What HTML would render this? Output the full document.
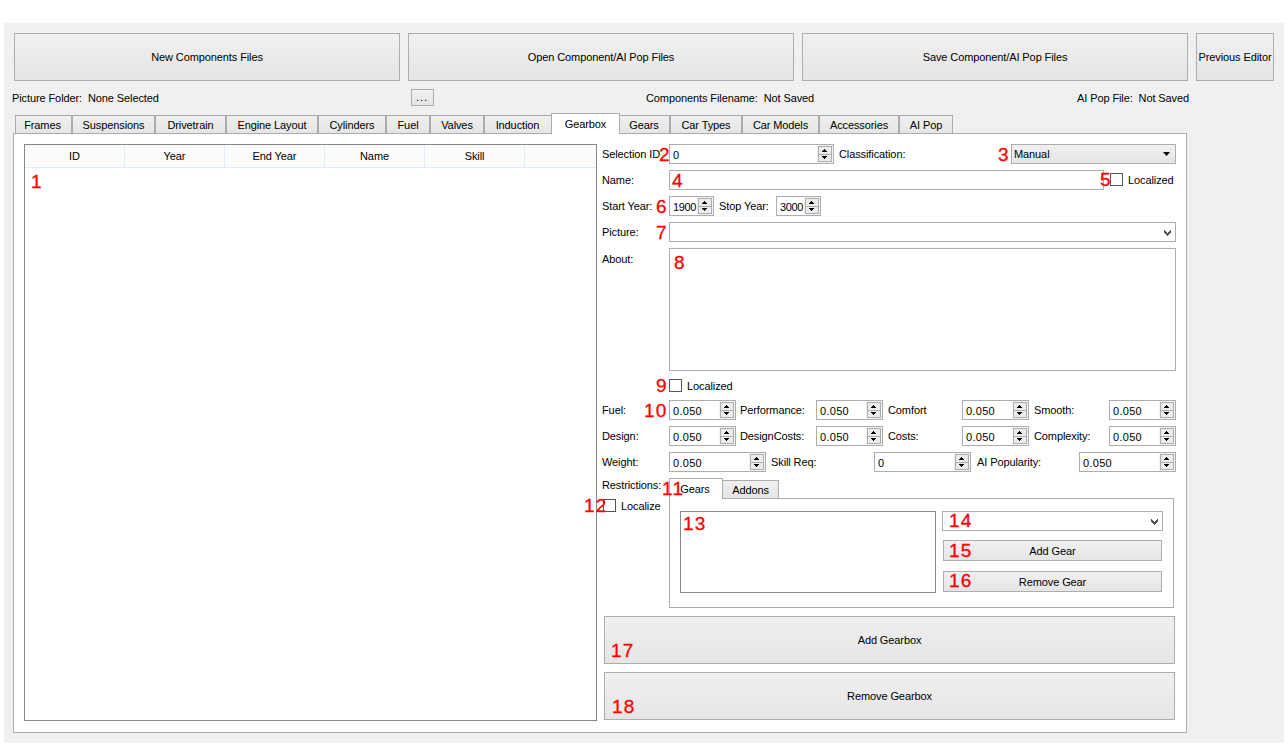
<!DOCTYPE html>
<html><head><meta charset="utf-8">
<style>
*{box-sizing:border-box;margin:0;padding:0}
html,body{width:1288px;height:747px;background:#fff;overflow:hidden;position:relative;font-family:"Liberation Sans",sans-serif;font-size:11px;color:#000}
div,span,svg{position:absolute}
.win{left:4px;top:23px;width:1280px;height:720px;background:#f0f0f0}
.btn{border:1px solid #adadad;background:linear-gradient(#f0f0f0,#e5e5e5)}
.btn .t{left:0;right:0;text-align:center}
.t{white-space:nowrap;line-height:13px;letter-spacing:-0.1px}
.tab{top:115px;height:19px;border:1px solid #acacac;background:linear-gradient(#f0f0f0,#e5e5e5)}
.tab .t{left:0;right:0;text-align:center;top:3px}
.tab.sel{top:113px;height:21px;background:#fff;border-right:1px solid #acacac;box-shadow:none;border-bottom:none;z-index:3}
.tab.sel .t{top:4px}
.pane{border:1px solid #acacac;background:#fff}
.edit{border:1px solid #abadb3;background:#fff}
.chk{width:13px;height:13px;border:1px solid #555;background:#fff}
.red{color:#f00;font-size:19px;line-height:19px;white-space:nowrap;-webkit-text-stroke:0.3px #f00;letter-spacing:1.3px;z-index:10}
.spin{border:1px solid #abadb3;background:#fff}
.spin .t{letter-spacing:-0.35px}
.sb{background:#f3f3f3}
.bx{border:1px solid #adadad;background:#ececec}
.ar{background:#000}
</style></head><body>
<div class="win"></div>
<div class="btn" style="left:14px;top:33px;width:386px;height:48px"><span class="t" style="top:17px">New Components Files</span></div>
<div class="btn" style="left:408px;top:33px;width:386px;height:48px"><span class="t" style="top:17px">Open Component/AI Pop Files</span></div>
<div class="btn" style="left:802px;top:33px;width:386px;height:48px"><span class="t" style="top:17px">Save Component/AI Pop Files</span></div>
<div class="btn" style="left:1196px;top:33px;width:78px;height:48px"><span class="t" style="top:17px">Previous Editor</span></div>
<span class="t" style="left:12px;top:92px;">Picture Folder:&nbsp; None Selected</span>
<div class="btn" style="left:411px;top:89px;width:23px;height:17px"><span class="t" style="left:4px;right:auto;text-align:left;top:1px;letter-spacing:1px">...</span></div>
<span class="t" style="left:646px;top:92px;">Components Filename:&nbsp; Not Saved</span>
<span class="t" style="left:1077px;top:92px;">AI Pop File:&nbsp; Not Saved</span>
<div class="pane" style="left:13px;top:133px;width:1174px;height:600px;"></div>
<div class="tab" style="left:15px;width:57px"><span class="t" style="left:-1px;right:1px;">Frames</span></div>
<div class="tab" style="left:72px;width:83px"><span class="t" style="">Suspensions</span></div>
<div class="tab" style="left:155px;width:71px"><span class="t" style="">Drivetrain</span></div>
<div class="tab" style="left:226px;width:92px"><span class="t" style="">Engine Layout</span></div>
<div class="tab" style="left:318px;width:68px"><span class="t" style="">Cylinders</span></div>
<div class="tab" style="left:386px;width:44px"><span class="t" style="">Fuel</span></div>
<div class="tab" style="left:430px;width:54px"><span class="t" style="">Valves</span></div>
<div class="tab" style="left:484px;width:69px"><span class="t" style="left:-1px;right:1px;">Induction</span></div>
<div class="tab" style="left:618px;width:52px"><span class="t" style="">Gears</span></div>
<div class="tab" style="left:670px;width:72px"><span class="t" style="">Car Types</span></div>
<div class="tab" style="left:742px;width:77px"><span class="t" style="">Car Models</span></div>
<div class="tab" style="left:819px;width:80px"><span class="t" style="">Accessories</span></div>
<div class="tab" style="left:899px;width:54px"><span class="t" style="">AI Pop</span></div>
<div class="tab sel" style="left:551px;width:69px"><span class="t">Gearbox</span></div>
<div class="" style="left:24px;top:144px;width:573px;height:577px;border:1px solid #828790;background:#fff"></div>
<div class="" style="left:25px;top:145px;width:571px;height:22px;background:#fcfcfc"></div>
<div class="" style="left:25px;top:167px;width:571px;height:1px;background:#e0ebf8"></div>
<div class="" style="left:124px;top:145px;width:1px;height:22px;background:#e0ebf8"></div>
<div class="" style="left:224px;top:145px;width:1px;height:22px;background:#e0ebf8"></div>
<div class="" style="left:324px;top:145px;width:1px;height:22px;background:#e0ebf8"></div>
<div class="" style="left:424px;top:145px;width:1px;height:22px;background:#e0ebf8"></div>
<div class="" style="left:524px;top:145px;width:1px;height:22px;background:#e0ebf8"></div>
<span class="t" style="left:25px;width:99px;text-align:center;top:150px">ID</span>
<span class="t" style="left:125px;width:99px;text-align:center;top:150px">Year</span>
<span class="t" style="left:225px;width:99px;text-align:center;top:150px">End Year</span>
<span class="t" style="left:325px;width:99px;text-align:center;top:150px">Name</span>
<span class="t" style="left:425px;width:99px;text-align:center;top:150px">Skill</span>
<span class="red" style="left:31px;top:172px">1</span>
<span class="t" style="left:602px;top:148px;">Selection ID</span>
<span class="red" style="left:659px;top:145px">2</span>
<div class="spin" style="left:669px;top:144px;width:165px;height:20px;"><span class="t" style="left:3px;top:4px;letter-spacing:0">0</span></div>
<div class="sb" style="left:817px;top:145px;width:16px;height:18px;"></div>
<div class="bx" style="left:818px;top:146px;width:14px;height:16px;"></div>
<div class="" style="left:819px;top:154px;width:12px;height:1px;background:#adadad"></div>
<div class="ar" style="left:824px;top:149px;width:1px;height:1px"></div><div class="ar" style="left:823px;top:150px;width:3px;height:1px"></div><div class="ar" style="left:822px;top:151px;width:5px;height:1px"></div><div class="ar" style="left:822px;top:156px;width:5px;height:1px"></div><div class="ar" style="left:823px;top:157px;width:3px;height:1px"></div><div class="ar" style="left:824px;top:158px;width:1px;height:1px"></div>
<span class="t" style="left:839px;top:148px;">Classification:</span>
<span class="red" style="left:998px;top:145px">3</span>
<div class="btn" style="left:1011px;top:144px;width:165px;height:20px;"><span class="t" style="left:2px;right:auto;text-align:left;top:3px">Manual</span></div>
<div style="left:1163px;top:152px;width:8px;height:5px"><svg width="7" height="5" viewBox="0 0 7 5" style="left:0;top:0"><path d="M0 0 H7 L3.5 4 Z" fill="#000"/></svg></div>
<span class="t" style="left:602px;top:174px;">Name:</span>
<div class="edit" style="left:669px;top:170px;width:435px;height:20px;"></div>
<span class="red" style="left:672px;top:171px">4</span>
<span class="red" style="left:1100px;top:170px">5</span>
<div class="chk" style="left:1110px;top:173px"></div>
<span class="t" style="left:1128px;top:174px;">Localized</span>
<span class="t" style="left:602px;top:200px;">Start Year:</span>
<span class="red" style="left:656px;top:197px">6</span>
<div class="spin" style="left:669px;top:196px;width:45px;height:20px;"><span class="t" style="left:3px;top:4px;letter-spacing:-0.35px">1900</span></div>
<div class="sb" style="left:697px;top:197px;width:16px;height:18px;"></div>
<div class="bx" style="left:698px;top:198px;width:14px;height:16px;"></div>
<div class="" style="left:699px;top:206px;width:12px;height:1px;background:#adadad"></div>
<div class="ar" style="left:704px;top:201px;width:1px;height:1px"></div><div class="ar" style="left:703px;top:202px;width:3px;height:1px"></div><div class="ar" style="left:702px;top:203px;width:5px;height:1px"></div><div class="ar" style="left:702px;top:208px;width:5px;height:1px"></div><div class="ar" style="left:703px;top:209px;width:3px;height:1px"></div><div class="ar" style="left:704px;top:210px;width:1px;height:1px"></div>
<span class="t" style="left:719px;top:200px;">Stop Year:</span>
<div class="spin" style="left:776px;top:196px;width:45px;height:20px;"><span class="t" style="left:3px;top:4px;letter-spacing:-0.35px">3000</span></div>
<div class="sb" style="left:804px;top:197px;width:16px;height:18px;"></div>
<div class="bx" style="left:805px;top:198px;width:14px;height:16px;"></div>
<div class="" style="left:806px;top:206px;width:12px;height:1px;background:#adadad"></div>
<div class="ar" style="left:811px;top:201px;width:1px;height:1px"></div><div class="ar" style="left:810px;top:202px;width:3px;height:1px"></div><div class="ar" style="left:809px;top:203px;width:5px;height:1px"></div><div class="ar" style="left:809px;top:208px;width:5px;height:1px"></div><div class="ar" style="left:810px;top:209px;width:3px;height:1px"></div><div class="ar" style="left:811px;top:210px;width:1px;height:1px"></div>
<span class="t" style="left:602px;top:226px;">Picture:</span>
<span class="red" style="left:656px;top:223px">7</span>
<div class="edit" style="left:669px;top:222px;width:507px;height:20px;"></div>
<div style="left:1164px;top:230px;width:1px;height:3px;background:#555"></div>
<div style="left:1165px;top:231px;width:1px;height:3px;background:#555"></div>
<div style="left:1166px;top:232px;width:1px;height:3px;background:#555"></div>
<div style="left:1167px;top:233px;width:1px;height:3px;background:#555"></div>
<div style="left:1168px;top:232px;width:1px;height:3px;background:#555"></div>
<div style="left:1169px;top:231px;width:1px;height:3px;background:#555"></div>
<div style="left:1170px;top:230px;width:1px;height:3px;background:#555"></div>
<span class="t" style="left:602px;top:253px;">About:</span>
<div class="edit" style="left:669px;top:248px;width:507px;height:123px;"></div>
<span class="red" style="left:674px;top:253px">8</span>
<span class="red" style="left:656px;top:376px">9</span>
<div class="chk" style="left:669px;top:379px"></div>
<span class="t" style="left:687px;top:380px;">Localized</span>
<span class="t" style="left:602px;top:404px;">Fuel:</span>
<span class="red" style="left:644px;top:401px">10</span>
<div class="spin" style="left:669px;top:400px;width:67px;height:20px;"><span class="t" style="left:3px;top:4px;letter-spacing:0.3px">0.050</span></div>
<div class="sb" style="left:719px;top:401px;width:16px;height:18px;"></div>
<div class="bx" style="left:720px;top:402px;width:14px;height:16px;"></div>
<div class="" style="left:721px;top:410px;width:12px;height:1px;background:#adadad"></div>
<div class="ar" style="left:726px;top:405px;width:1px;height:1px"></div><div class="ar" style="left:725px;top:406px;width:3px;height:1px"></div><div class="ar" style="left:724px;top:407px;width:5px;height:1px"></div><div class="ar" style="left:724px;top:412px;width:5px;height:1px"></div><div class="ar" style="left:725px;top:413px;width:3px;height:1px"></div><div class="ar" style="left:726px;top:414px;width:1px;height:1px"></div>
<span class="t" style="left:740px;top:404px;">Performance:</span>
<div class="spin" style="left:816px;top:400px;width:67px;height:20px;"><span class="t" style="left:3px;top:4px;letter-spacing:0.3px">0.050</span></div>
<div class="sb" style="left:866px;top:401px;width:16px;height:18px;"></div>
<div class="bx" style="left:867px;top:402px;width:14px;height:16px;"></div>
<div class="" style="left:868px;top:410px;width:12px;height:1px;background:#adadad"></div>
<div class="ar" style="left:873px;top:405px;width:1px;height:1px"></div><div class="ar" style="left:872px;top:406px;width:3px;height:1px"></div><div class="ar" style="left:871px;top:407px;width:5px;height:1px"></div><div class="ar" style="left:871px;top:412px;width:5px;height:1px"></div><div class="ar" style="left:872px;top:413px;width:3px;height:1px"></div><div class="ar" style="left:873px;top:414px;width:1px;height:1px"></div>
<span class="t" style="left:888px;top:404px;">Comfort</span>
<div class="spin" style="left:962px;top:400px;width:67px;height:20px;"><span class="t" style="left:3px;top:4px;letter-spacing:0.3px">0.050</span></div>
<div class="sb" style="left:1012px;top:401px;width:16px;height:18px;"></div>
<div class="bx" style="left:1013px;top:402px;width:14px;height:16px;"></div>
<div class="" style="left:1014px;top:410px;width:12px;height:1px;background:#adadad"></div>
<div class="ar" style="left:1019px;top:405px;width:1px;height:1px"></div><div class="ar" style="left:1018px;top:406px;width:3px;height:1px"></div><div class="ar" style="left:1017px;top:407px;width:5px;height:1px"></div><div class="ar" style="left:1017px;top:412px;width:5px;height:1px"></div><div class="ar" style="left:1018px;top:413px;width:3px;height:1px"></div><div class="ar" style="left:1019px;top:414px;width:1px;height:1px"></div>
<span class="t" style="left:1034px;top:404px;">Smooth:</span>
<div class="spin" style="left:1109px;top:400px;width:67px;height:20px;"><span class="t" style="left:3px;top:4px;letter-spacing:0.3px">0.050</span></div>
<div class="sb" style="left:1159px;top:401px;width:16px;height:18px;"></div>
<div class="bx" style="left:1160px;top:402px;width:14px;height:16px;"></div>
<div class="" style="left:1161px;top:410px;width:12px;height:1px;background:#adadad"></div>
<div class="ar" style="left:1166px;top:405px;width:1px;height:1px"></div><div class="ar" style="left:1165px;top:406px;width:3px;height:1px"></div><div class="ar" style="left:1164px;top:407px;width:5px;height:1px"></div><div class="ar" style="left:1164px;top:412px;width:5px;height:1px"></div><div class="ar" style="left:1165px;top:413px;width:3px;height:1px"></div><div class="ar" style="left:1166px;top:414px;width:1px;height:1px"></div>
<span class="t" style="left:602px;top:430px;">Design:</span>
<div class="spin" style="left:669px;top:426px;width:67px;height:20px;"><span class="t" style="left:3px;top:4px;letter-spacing:0.3px">0.050</span></div>
<div class="sb" style="left:719px;top:427px;width:16px;height:18px;"></div>
<div class="bx" style="left:720px;top:428px;width:14px;height:16px;"></div>
<div class="" style="left:721px;top:436px;width:12px;height:1px;background:#adadad"></div>
<div class="ar" style="left:726px;top:431px;width:1px;height:1px"></div><div class="ar" style="left:725px;top:432px;width:3px;height:1px"></div><div class="ar" style="left:724px;top:433px;width:5px;height:1px"></div><div class="ar" style="left:724px;top:438px;width:5px;height:1px"></div><div class="ar" style="left:725px;top:439px;width:3px;height:1px"></div><div class="ar" style="left:726px;top:440px;width:1px;height:1px"></div>
<span class="t" style="left:740px;top:430px;">DesignCosts:</span>
<div class="spin" style="left:816px;top:426px;width:67px;height:20px;"><span class="t" style="left:3px;top:4px;letter-spacing:0.3px">0.050</span></div>
<div class="sb" style="left:866px;top:427px;width:16px;height:18px;"></div>
<div class="bx" style="left:867px;top:428px;width:14px;height:16px;"></div>
<div class="" style="left:868px;top:436px;width:12px;height:1px;background:#adadad"></div>
<div class="ar" style="left:873px;top:431px;width:1px;height:1px"></div><div class="ar" style="left:872px;top:432px;width:3px;height:1px"></div><div class="ar" style="left:871px;top:433px;width:5px;height:1px"></div><div class="ar" style="left:871px;top:438px;width:5px;height:1px"></div><div class="ar" style="left:872px;top:439px;width:3px;height:1px"></div><div class="ar" style="left:873px;top:440px;width:1px;height:1px"></div>
<span class="t" style="left:888px;top:430px;">Costs:</span>
<div class="spin" style="left:962px;top:426px;width:67px;height:20px;"><span class="t" style="left:3px;top:4px;letter-spacing:0.3px">0.050</span></div>
<div class="sb" style="left:1012px;top:427px;width:16px;height:18px;"></div>
<div class="bx" style="left:1013px;top:428px;width:14px;height:16px;"></div>
<div class="" style="left:1014px;top:436px;width:12px;height:1px;background:#adadad"></div>
<div class="ar" style="left:1019px;top:431px;width:1px;height:1px"></div><div class="ar" style="left:1018px;top:432px;width:3px;height:1px"></div><div class="ar" style="left:1017px;top:433px;width:5px;height:1px"></div><div class="ar" style="left:1017px;top:438px;width:5px;height:1px"></div><div class="ar" style="left:1018px;top:439px;width:3px;height:1px"></div><div class="ar" style="left:1019px;top:440px;width:1px;height:1px"></div>
<span class="t" style="left:1034px;top:430px;">Complexity:</span>
<div class="spin" style="left:1109px;top:426px;width:67px;height:20px;"><span class="t" style="left:3px;top:4px;letter-spacing:0.3px">0.050</span></div>
<div class="sb" style="left:1159px;top:427px;width:16px;height:18px;"></div>
<div class="bx" style="left:1160px;top:428px;width:14px;height:16px;"></div>
<div class="" style="left:1161px;top:436px;width:12px;height:1px;background:#adadad"></div>
<div class="ar" style="left:1166px;top:431px;width:1px;height:1px"></div><div class="ar" style="left:1165px;top:432px;width:3px;height:1px"></div><div class="ar" style="left:1164px;top:433px;width:5px;height:1px"></div><div class="ar" style="left:1164px;top:438px;width:5px;height:1px"></div><div class="ar" style="left:1165px;top:439px;width:3px;height:1px"></div><div class="ar" style="left:1166px;top:440px;width:1px;height:1px"></div>
<span class="t" style="left:602px;top:456px;">Weight:</span>
<div class="spin" style="left:669px;top:452px;width:97px;height:20px;"><span class="t" style="left:3px;top:4px;letter-spacing:0.3px">0.050</span></div>
<div class="sb" style="left:749px;top:453px;width:16px;height:18px;"></div>
<div class="bx" style="left:750px;top:454px;width:14px;height:16px;"></div>
<div class="" style="left:751px;top:462px;width:12px;height:1px;background:#adadad"></div>
<div class="ar" style="left:756px;top:457px;width:1px;height:1px"></div><div class="ar" style="left:755px;top:458px;width:3px;height:1px"></div><div class="ar" style="left:754px;top:459px;width:5px;height:1px"></div><div class="ar" style="left:754px;top:464px;width:5px;height:1px"></div><div class="ar" style="left:755px;top:465px;width:3px;height:1px"></div><div class="ar" style="left:756px;top:466px;width:1px;height:1px"></div>
<span class="t" style="left:771px;top:456px;">Skill Req:</span>
<div class="spin" style="left:874px;top:452px;width:97px;height:20px;"><span class="t" style="left:3px;top:4px;letter-spacing:0">0</span></div>
<div class="sb" style="left:954px;top:453px;width:16px;height:18px;"></div>
<div class="bx" style="left:955px;top:454px;width:14px;height:16px;"></div>
<div class="" style="left:956px;top:462px;width:12px;height:1px;background:#adadad"></div>
<div class="ar" style="left:961px;top:457px;width:1px;height:1px"></div><div class="ar" style="left:960px;top:458px;width:3px;height:1px"></div><div class="ar" style="left:959px;top:459px;width:5px;height:1px"></div><div class="ar" style="left:959px;top:464px;width:5px;height:1px"></div><div class="ar" style="left:960px;top:465px;width:3px;height:1px"></div><div class="ar" style="left:961px;top:466px;width:1px;height:1px"></div>
<span class="t" style="left:977px;top:456px;">AI Popularity:</span>
<div class="spin" style="left:1079px;top:452px;width:97px;height:20px;"><span class="t" style="left:3px;top:4px;letter-spacing:0.3px">0.050</span></div>
<div class="sb" style="left:1159px;top:453px;width:16px;height:18px;"></div>
<div class="bx" style="left:1160px;top:454px;width:14px;height:16px;"></div>
<div class="" style="left:1161px;top:462px;width:12px;height:1px;background:#adadad"></div>
<div class="ar" style="left:1166px;top:457px;width:1px;height:1px"></div><div class="ar" style="left:1165px;top:458px;width:3px;height:1px"></div><div class="ar" style="left:1164px;top:459px;width:5px;height:1px"></div><div class="ar" style="left:1164px;top:464px;width:5px;height:1px"></div><div class="ar" style="left:1165px;top:465px;width:3px;height:1px"></div><div class="ar" style="left:1166px;top:466px;width:1px;height:1px"></div>
<span class="t" style="left:602px;top:479px;">Restrictions:</span>
<div class="pane" style="left:669px;top:498px;width:505px;height:110px;"></div>
<div class="tab" style="left:722px;top:480px;width:57px;height:19px;border-right:1px solid #acacac"><span class="t" style="top:3px">Addons</span></div>
<div class="tab sel" style="left:669px;top:478px;width:54px;height:21px"><span class="t" style="top:4px;left:-1px;right:1px">Gears</span></div>
<span class="red" style="left:662px;top:479px">11</span>
<span class="red" style="left:584px;top:496px">12</span>
<div class="chk" style="left:603px;top:499px"></div>
<span class="t" style="left:621px;top:500px;">Localize</span>
<div class="" style="left:680px;top:511px;width:256px;height:82px;border:1px solid #828790;background:#fff"></div>
<span class="red" style="left:683px;top:514px">13</span>
<div class="edit" style="left:942px;top:511px;width:221px;height:20px;"></div>
<div style="left:1151px;top:519px;width:1px;height:3px;background:#555"></div>
<div style="left:1152px;top:520px;width:1px;height:3px;background:#555"></div>
<div style="left:1153px;top:521px;width:1px;height:3px;background:#555"></div>
<div style="left:1154px;top:522px;width:1px;height:3px;background:#555"></div>
<div style="left:1155px;top:521px;width:1px;height:3px;background:#555"></div>
<div style="left:1156px;top:520px;width:1px;height:3px;background:#555"></div>
<div style="left:1157px;top:519px;width:1px;height:3px;background:#555"></div>
<span class="red" style="left:949px;top:511px">14</span>
<div class="btn" style="left:943px;top:540px;width:219px;height:21px;"><span class="t" style="top:4px">Add Gear</span></div>
<span class="red" style="left:949px;top:541px">15</span>
<div class="btn" style="left:943px;top:571px;width:219px;height:21px;"><span class="t" style="top:4px">Remove Gear</span></div>
<span class="red" style="left:949px;top:571px">16</span>
<div class="btn" style="left:604px;top:616px;width:571px;height:48px;"><span class="t" style="top:17px">Add Gearbox</span></div>
<span class="red" style="left:611px;top:641px">17</span>
<div class="btn" style="left:604px;top:672px;width:571px;height:48px;"><span class="t" style="top:17px">Remove Gearbox</span></div>
<span class="red" style="left:612px;top:697px">18</span>
</body></html>
